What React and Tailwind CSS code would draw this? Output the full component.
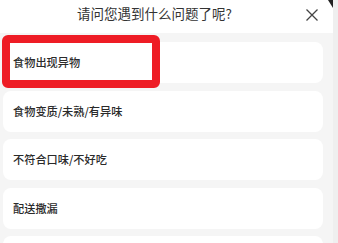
import React from "react";

const PROBLEMS = [
  "食物出现异物",
  "食物变质/未熟/有异味",
  "不符合口味/不好吃",
  "配送撒漏",
  ""
];

const FONT = { fontFamily: '"Noto Sans CJK SC", "Noto Sans", sans-serif' };

export default function App() {
  return (
    <div className="relative flex w-[338px] h-[243px] overflow-hidden bg-[#f5f5f5]" style={FONT}>
      <div className="flex flex-col w-[333px]">
        <div className="relative flex items-center justify-center h-[33px] bg-white shrink-0">
          <span className="text-[13.5px] text-[#333] ml-[-24px] pb-[6px]">请问您遇到什么问题了呢?</span>
          <svg
            className="absolute left-[305px] top-[8px]"
            width="14"
            height="14"
            viewBox="0 0 14 14"
            fill="none"
            stroke="#444"
            strokeWidth="1.3"
          >
            <path d="M1.5 1.5L12.5 12.5M12.5 1.5L1.5 12.5" />
          </svg>
        </div>
        <div className="flex flex-col gap-[7.5px] pt-[9px] pl-[3px]">
          {PROBLEMS.map((p, i) => (
            <div
              key={i}
              className="flex items-center h-[41px] w-[320px] shrink-0 rounded-[8px] bg-white pl-[10px] text-[11.2px] font-medium text-[#2a2a2a]"
            >
              {p}
            </div>
          ))}
        </div>
      </div>
      <div className="w-[5px] bg-[#efefef]" />
      <svg className="absolute left-[326px] top-0" width="8" height="9" viewBox="0 0 8 9">
        <polygon points="2,0 7,0 7,8" fill="#222" />
      </svg>
      <div className="absolute left-[2px] top-[35px] w-[158px] h-[53px] rounded-[6px] border-[8px] border-[#ee1c25]" />
    </div>
  );
}
